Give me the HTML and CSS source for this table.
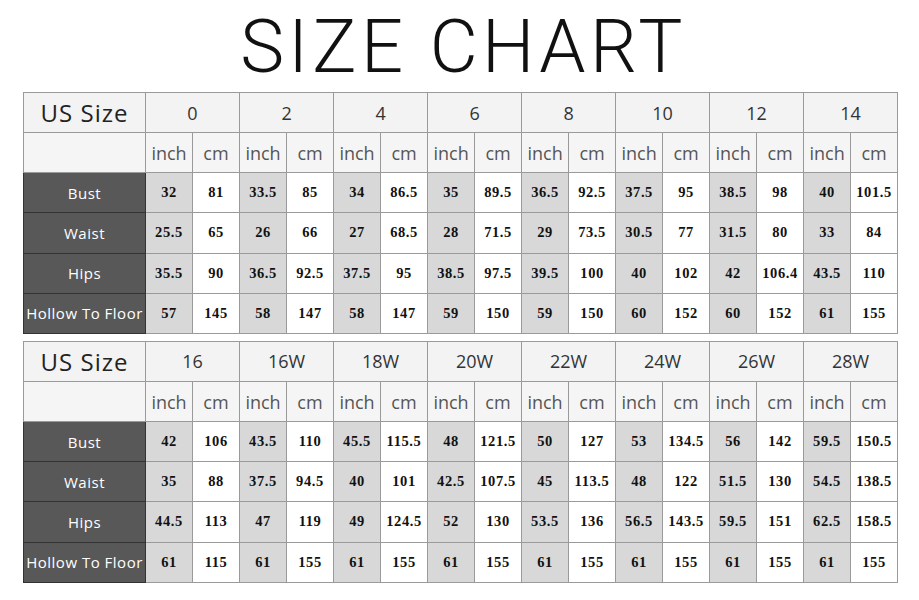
FILE: index.html
```html
<!DOCTYPE html>
<html>
<head>
<meta charset="utf-8">
<link rel="stylesheet" href="styles.css">
</head>
<body>
<h1 class="title">SIZE CHART</h1>
<table class="chart">
<colgroup><col class="c-label"><col span="16" class="c-val"></colgroup>
<tr class="r-size"><th class="us">US Size</th><th colspan="2">0</th><th colspan="2">2</th><th colspan="2">4</th><th colspan="2">6</th><th colspan="2">8</th><th colspan="2">10</th><th colspan="2">12</th><th colspan="2">14</th></tr>
<tr class="r-unit"><th></th><th>inch</th><th>cm</th><th>inch</th><th>cm</th><th>inch</th><th>cm</th><th>inch</th><th>cm</th><th>inch</th><th>cm</th><th>inch</th><th>cm</th><th>inch</th><th>cm</th><th>inch</th><th>cm</th></tr>
<tr><th class="lbl">Bust</th><td class="in">32</td><td>81</td><td class="in">33.5</td><td>85</td><td class="in">34</td><td>86.5</td><td class="in">35</td><td>89.5</td><td class="in">36.5</td><td>92.5</td><td class="in">37.5</td><td>95</td><td class="in">38.5</td><td>98</td><td class="in">40</td><td>101.5</td></tr>
<tr><th class="lbl">Waist</th><td class="in">25.5</td><td>65</td><td class="in">26</td><td>66</td><td class="in">27</td><td>68.5</td><td class="in">28</td><td>71.5</td><td class="in">29</td><td>73.5</td><td class="in">30.5</td><td>77</td><td class="in">31.5</td><td>80</td><td class="in">33</td><td>84</td></tr>
<tr><th class="lbl">Hips</th><td class="in">35.5</td><td>90</td><td class="in">36.5</td><td>92.5</td><td class="in">37.5</td><td>95</td><td class="in">38.5</td><td>97.5</td><td class="in">39.5</td><td>100</td><td class="in">40</td><td>102</td><td class="in">42</td><td>106.4</td><td class="in">43.5</td><td>110</td></tr>
<tr><th class="lbl">Hollow To Floor</th><td class="in">57</td><td>145</td><td class="in">58</td><td>147</td><td class="in">58</td><td>147</td><td class="in">59</td><td>150</td><td class="in">59</td><td>150</td><td class="in">60</td><td>152</td><td class="in">60</td><td>152</td><td class="in">61</td><td>155</td></tr>
</table>
<table class="chart">
<colgroup><col class="c-label"><col span="16" class="c-val"></colgroup>
<tr class="r-size"><th class="us">US Size</th><th colspan="2">16</th><th colspan="2">16W</th><th colspan="2">18W</th><th colspan="2">20W</th><th colspan="2">22W</th><th colspan="2">24W</th><th colspan="2">26W</th><th colspan="2">28W</th></tr>
<tr class="r-unit"><th></th><th>inch</th><th>cm</th><th>inch</th><th>cm</th><th>inch</th><th>cm</th><th>inch</th><th>cm</th><th>inch</th><th>cm</th><th>inch</th><th>cm</th><th>inch</th><th>cm</th><th>inch</th><th>cm</th></tr>
<tr><th class="lbl">Bust</th><td class="in">42</td><td>106</td><td class="in">43.5</td><td>110</td><td class="in">45.5</td><td>115.5</td><td class="in">48</td><td>121.5</td><td class="in">50</td><td>127</td><td class="in">53</td><td>134.5</td><td class="in">56</td><td>142</td><td class="in">59.5</td><td>150.5</td></tr>
<tr><th class="lbl">Waist</th><td class="in">35</td><td>88</td><td class="in">37.5</td><td>94.5</td><td class="in">40</td><td>101</td><td class="in">42.5</td><td>107.5</td><td class="in">45</td><td>113.5</td><td class="in">48</td><td>122</td><td class="in">51.5</td><td>130</td><td class="in">54.5</td><td>138.5</td></tr>
<tr><th class="lbl">Hips</th><td class="in">44.5</td><td>113</td><td class="in">47</td><td>119</td><td class="in">49</td><td>124.5</td><td class="in">52</td><td>130</td><td class="in">53.5</td><td>136</td><td class="in">56.5</td><td>143.5</td><td class="in">59.5</td><td>151</td><td class="in">62.5</td><td>158.5</td></tr>
<tr><th class="lbl">Hollow To Floor</th><td class="in">61</td><td>115</td><td class="in">61</td><td>155</td><td class="in">61</td><td>155</td><td class="in">61</td><td>155</td><td class="in">61</td><td>155</td><td class="in">61</td><td>155</td><td class="in">61</td><td>155</td><td class="in">61</td><td>155</td></tr>
</table>
</body>
</html>
```
FILE: styles.css
```css
html, body {
  margin: 0;
  padding: 0;
  background: #fff;
}
.title {
  margin: 10px 0 8px 0;
  padding-left: 8px;
  height: 74px;
  font-family: Roboto, "Liberation Sans", sans-serif;
  font-weight: 300;
  font-size: 74px;
  line-height: 74px;
  letter-spacing: 4.3px;
  text-align: center;
  color: #111;
}
.chart {
  margin: 0 0 7px 23px;
  width: 875px;
  border-collapse: collapse;
  table-layout: fixed;
}
.c-label { width: 122px; }
.c-val { width: 47px; }
.chart th, .chart td {
  height: 40.15px;
  padding: 0;
  border: 1px solid #9a9a9a;
  text-align: center;
  vertical-align: middle;
  box-sizing: border-box;
}
.r-size th {
  background: #f3f3f3;
  font-family: "Open Sans", "Noto Sans", sans-serif;
  font-weight: 400;
  font-size: 18px;
  color: #333;
}
.r-size th.us {
  font-size: 24px;
  letter-spacing: 1px;
  color: #222;
}
.r-unit th {
  background: #f5f5f5;
  font-family: "Open Sans", "Noto Sans", sans-serif;
  font-weight: 400;
  font-size: 18px;
  color: #555;
}
.chart th.lbl {
  background: #585858;
  color: #fff;
  font-family: "Open Sans", "Noto Sans", sans-serif;
  font-weight: 400;
  font-size: 15px;
  letter-spacing: 0.5px;
  white-space: nowrap;
  border-color: #333;
}
.chart td {
  background: #fff;
  font-family: "Liberation Serif", serif;
  font-weight: 700;
  font-size: 14.5px;
  letter-spacing: 0.6px;
  color: #111;
}
.chart td.in {
  background: #d8d8d8;
}
```
